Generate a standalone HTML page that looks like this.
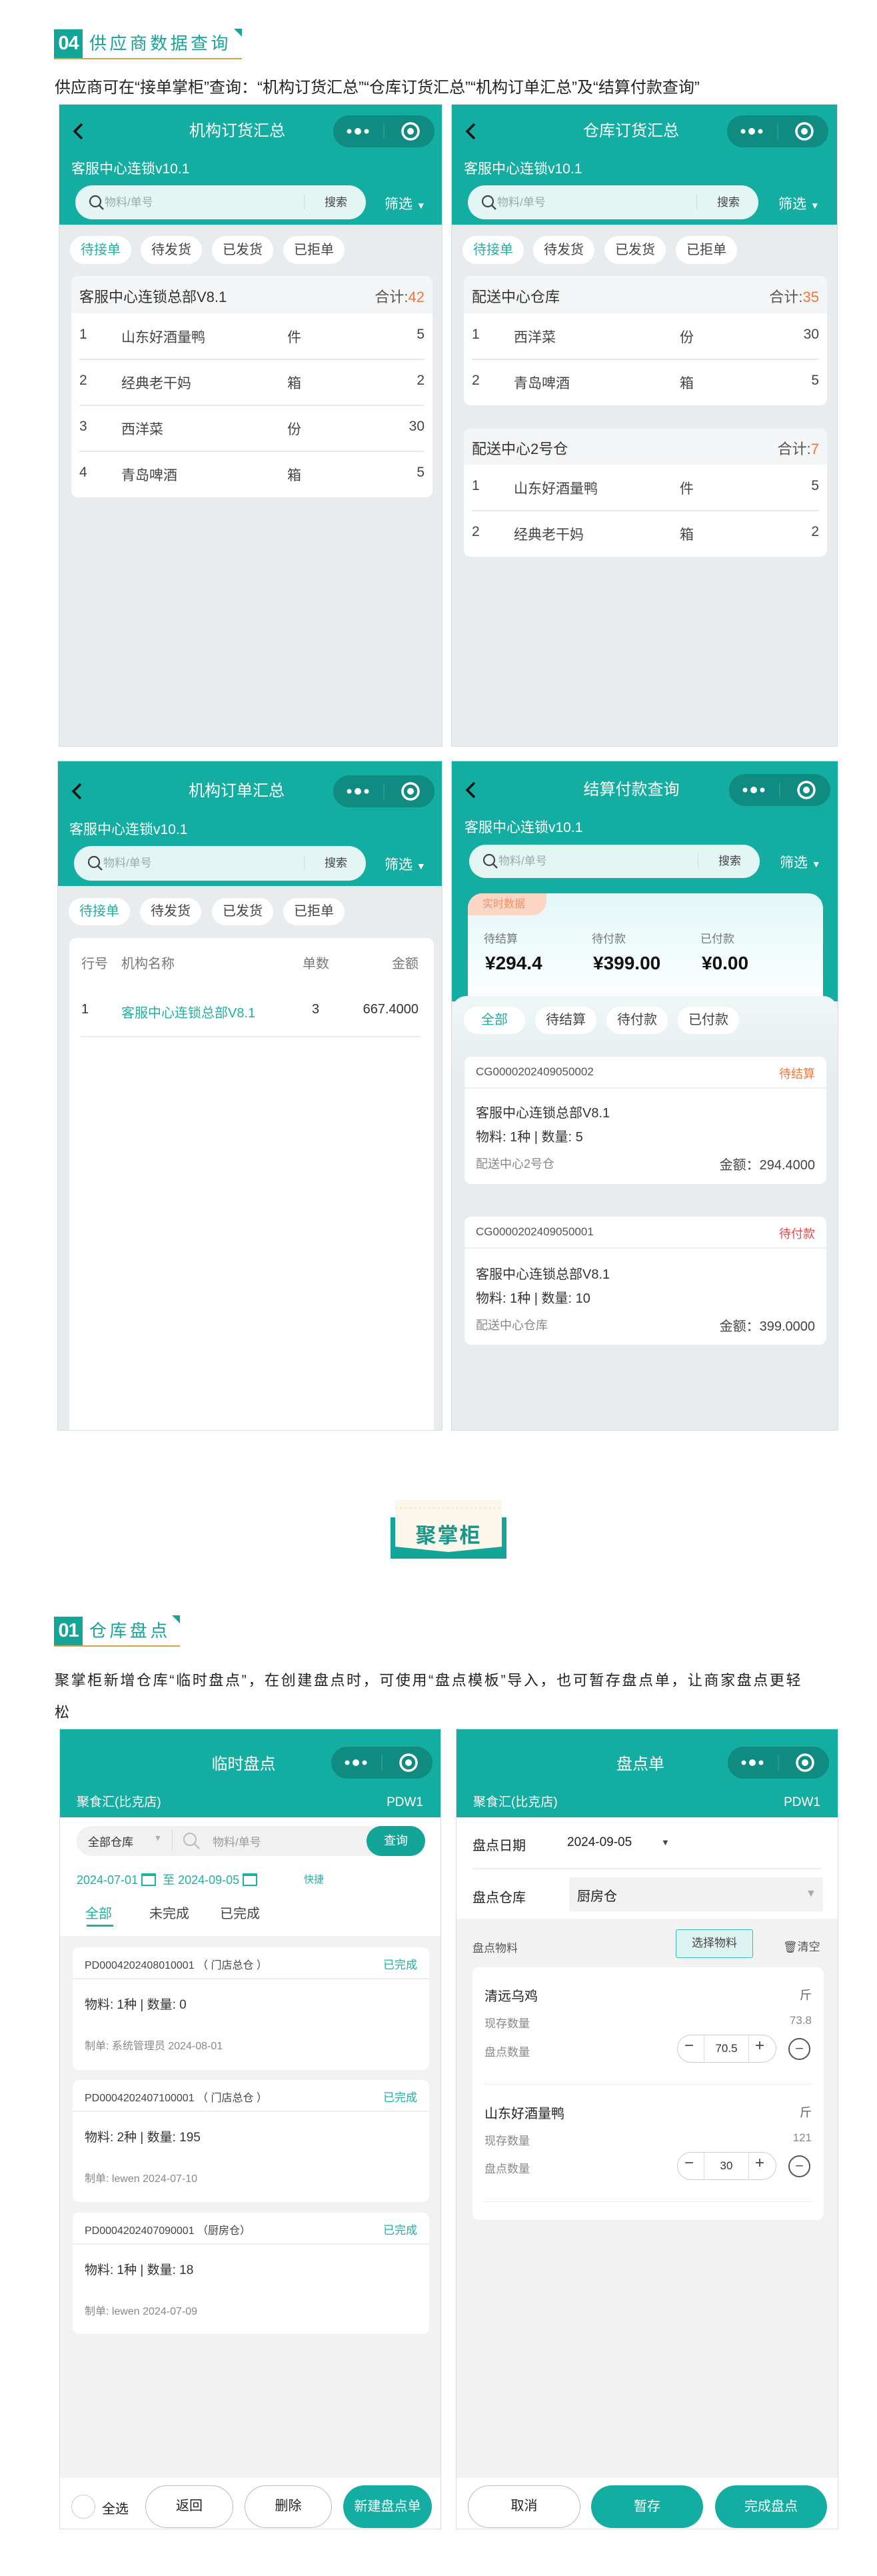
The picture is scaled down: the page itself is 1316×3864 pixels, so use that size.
<!DOCTYPE html>
<html><head><meta charset="utf-8">
<style>
*{margin:0;padding:0;box-sizing:border-box}
body{width:1316px;height:3864px;background:#fff;position:relative;overflow:hidden;font-family:"Liberation Sans","Noto Sans CJK SC",sans-serif;color:#333}
.a{position:absolute}
.ph{position:absolute;background:#e8ecee;overflow:hidden;border:1px solid #d8dcdc}
.hd{position:absolute;left:0;right:0;top:0;background:#13ada1}
.ttl{position:absolute;left:0;right:0;text-align:center;color:#fff;font-size:24px;line-height:30px}
.sub{position:absolute;color:#fff;font-size:21px;line-height:26px;white-space:nowrap}
.srch{position:absolute;background:#e4f6f4;border-radius:26px}
.srch .ph1{position:absolute;left:44px;top:0;font-size:17px;color:#9aa;line-height:inherit}
.srch .bt{position:absolute;right:28px;top:0;font-size:17px;color:#444}
.srch .sep{position:absolute;right:92px;top:14px;width:1px;height:22px;background:#cdd}
.flt{position:absolute;color:#fff;font-size:21px}
.tab{position:absolute;height:42px;width:92px;border-radius:21px;background:#fff;text-align:center;line-height:42px;font-size:20px;color:#444}
.card{position:absolute;background:#fff;border-radius:10px;overflow:hidden}
.ch{position:absolute;left:0;right:0;top:0;background:#f3f5f6}
.row{position:absolute;left:12px;right:12px;font-size:21px;color:#444}
.row span{position:absolute;top:0}
.t{color:#1fb0a4}
.o{color:#f0783a}
.r{color:#e84848}
.g{color:#888}
</style></head><body>

<!-- Section 04 header -->
<div class="a" style="left:81px;top:44px;width:43px;height:43px;background:#14a599;color:#fff;font-weight:bold;font-size:29px;line-height:43px;text-align:center;letter-spacing:-1px">04</div>
<div class="a" style="left:134px;top:42px;font-size:26px;color:#19a297;letter-spacing:4.4px;line-height:46px">供应商数据查询</div>
<svg class="a" style="left:351px;top:43px" width="12" height="12"><polygon points="0,0 12,0 12,12" fill="#14a599"/></svg>
<div class="a" style="left:81px;top:87px;width:282px;height:2px;background:#d6a24c"></div>
<div class="a" style="left:82px;top:116px;font-size:24px;line-height:32px;color:#222;white-space:nowrap">供应商可在“接单掌柜”查询：“机构订货汇总”“仓库订货汇总”“机构订单汇总”及“结算付款查询”</div>

<!-- Phone 1 -->
<div class="ph" style="left:88px;top:156px;width:576px;height:964px">
 <div class="hd" style="height:180px"></div>
 <svg class="a" style="left:16px;top:24px" width="24" height="32"><polyline points="18,5 7,16 18,27" fill="none" stroke="#111" stroke-width="3.5"/></svg>
 <div class="ttl" style="top:25px;padding-right:40px">机构订货汇总</div>
 <svg class="a" style="left:411px;top:16px" width="152" height="48"><rect width="152" height="48" rx="24" fill="#0f8b81"/><circle cx="24" cy="24" r="3.5" fill="#fff"/><circle cx="37" cy="24" r="5" fill="#fff"/><circle cx="50" cy="24" r="3.5" fill="#fff"/><line x1="76" y1="12" x2="76" y2="36" stroke="#2aa096" stroke-width="1.5"/><circle cx="116" cy="24" r="12" fill="none" stroke="#fff" stroke-width="3.5"/><circle cx="116" cy="24" r="5" fill="#fff"/></svg>
 <div class="sub" style="left:18px;top:84px">客服中心连锁v10.1</div>
 <div class="srch" style="left:24px;top:121px;width:436px;height:51px;line-height:51px"><svg class="a" style="left:20px;top:14px" width="24" height="24"><circle cx="10" cy="10" r="8" fill="none" stroke="#444" stroke-width="2.2"/><line x1="16" y1="16" x2="22" y2="22" stroke="#444" stroke-width="2.4"/></svg><span class="ph1">物料/单号</span><span class="sep"></span><span class="bt">搜索</span></div>
 <div class="flt" style="left:488px;top:133px">筛选 <span style="font-size:14px">▼</span></div>
 <div class="tab t" style="left:16px;top:197px">待接单</div>
 <div class="tab" style="left:122px;top:197px">待发货</div>
 <div class="tab" style="left:229px;top:197px">已发货</div>
 <div class="tab" style="left:336px;top:197px">已拒单</div>
 <div class="card" style="left:18px;top:257px;width:542px;height:332px">
  <div class="ch" style="height:56px"><span class="a" style="left:12px;top:14px;font-size:22px">客服中心连锁总部V8.1</span><span class="a" style="right:12px;top:14px;font-size:22px;color:#555">合计:<span class="o">42</span></span></div>
  <div class="row" style="top:76px"><span style="left:0">1</span><span style="left:63px">山东好酒量鸭</span><span style="left:312px">件</span><span style="right:0">5</span></div>
  <div class="a" style="left:12px;right:12px;top:124px;height:2px;background:#e6e8e8"></div>
  <div class="row" style="top:145px"><span style="left:0">2</span><span style="left:63px">经典老干妈</span><span style="left:312px">箱</span><span style="right:0">2</span></div>
  <div class="a" style="left:12px;right:12px;top:193px;height:2px;background:#e6e8e8"></div>
  <div class="row" style="top:214px"><span style="left:0">3</span><span style="left:63px">西洋菜</span><span style="left:312px">份</span><span style="right:0">30</span></div>
  <div class="a" style="left:12px;right:12px;top:262px;height:2px;background:#e6e8e8"></div>
  <div class="row" style="top:283px"><span style="left:0">4</span><span style="left:63px">青岛啤酒</span><span style="left:312px">箱</span><span style="right:0">5</span></div>
 </div>
</div>

<!-- Phone 2 -->
<div class="ph" style="left:677px;top:156px;width:580px;height:964px">
 <div class="hd" style="height:180px"></div>
 <svg class="a" style="left:16px;top:24px" width="24" height="32"><polyline points="18,5 7,16 18,27" fill="none" stroke="#111" stroke-width="3.5"/></svg>
 <div class="ttl" style="top:25px;padding-right:40px">仓库订货汇总</div>
 <svg class="a" style="left:413px;top:16px" width="152" height="48"><rect width="152" height="48" rx="24" fill="#0f8b81"/><circle cx="24" cy="24" r="3.5" fill="#fff"/><circle cx="37" cy="24" r="5" fill="#fff"/><circle cx="50" cy="24" r="3.5" fill="#fff"/><line x1="76" y1="12" x2="76" y2="36" stroke="#2aa096" stroke-width="1.5"/><circle cx="116" cy="24" r="12" fill="none" stroke="#fff" stroke-width="3.5"/><circle cx="116" cy="24" r="5" fill="#fff"/></svg>
 <div class="sub" style="left:18px;top:84px">客服中心连锁v10.1</div>
 <div class="srch" style="left:24px;top:121px;width:436px;height:51px;line-height:51px"><svg class="a" style="left:20px;top:14px" width="24" height="24"><circle cx="10" cy="10" r="8" fill="none" stroke="#444" stroke-width="2.2"/><line x1="16" y1="16" x2="22" y2="22" stroke="#444" stroke-width="2.4"/></svg><span class="ph1">物料/单号</span><span class="sep"></span><span class="bt">搜索</span></div>
 <div class="flt" style="left:490px;top:133px">筛选 <span style="font-size:14px">▼</span></div>
 <div class="tab t" style="left:16px;top:197px">待接单</div>
 <div class="tab" style="left:122px;top:197px">待发货</div>
 <div class="tab" style="left:229px;top:197px">已发货</div>
 <div class="tab" style="left:336px;top:197px">已拒单</div>
 <div class="card" style="left:18px;top:257px;width:545px;height:194px">
  <div class="ch" style="height:56px"><span class="a" style="left:12px;top:14px;font-size:22px">配送中心仓库</span><span class="a" style="right:12px;top:14px;font-size:22px;color:#555">合计:<span class="o">35</span></span></div>
  <div class="row" style="top:76px"><span style="left:0">1</span><span style="left:63px">西洋菜</span><span style="left:312px">份</span><span style="right:0">30</span></div>
  <div class="a" style="left:12px;right:12px;top:124px;height:2px;background:#e6e8e8"></div>
  <div class="row" style="top:145px"><span style="left:0">2</span><span style="left:63px">青岛啤酒</span><span style="left:312px">箱</span><span style="right:0">5</span></div>
 </div>
 <div class="card" style="left:18px;top:486px;width:545px;height:192px">
  <div class="ch" style="height:54px"><span class="a" style="left:12px;top:13px;font-size:22px">配送中心2号仓</span><span class="a" style="right:12px;top:13px;font-size:22px;color:#555">合计:<span class="o">7</span></span></div>
  <div class="row" style="top:74px"><span style="left:0">1</span><span style="left:63px">山东好酒量鸭</span><span style="left:312px">件</span><span style="right:0">5</span></div>
  <div class="a" style="left:12px;right:12px;top:122px;height:2px;background:#e6e8e8"></div>
  <div class="row" style="top:143px"><span style="left:0">2</span><span style="left:63px">经典老干妈</span><span style="left:312px">箱</span><span style="right:0">2</span></div>
 </div>
</div>

<!-- Phone 3 -->
<div class="ph" style="left:86px;top:1141px;width:578px;height:1005px">
 <div class="hd" style="height:187px"></div>
 <svg class="a" style="left:16px;top:29px" width="24" height="32"><polyline points="18,5 7,16 18,27" fill="none" stroke="#111" stroke-width="3.5"/></svg>
 <div class="ttl" style="top:30px;padding-right:40px">机构订单汇总</div>
 <svg class="a" style="left:413px;top:21px" width="152" height="48"><rect width="152" height="48" rx="24" fill="#0f8b81"/><circle cx="24" cy="24" r="3.5" fill="#fff"/><circle cx="37" cy="24" r="5" fill="#fff"/><circle cx="50" cy="24" r="3.5" fill="#fff"/><line x1="76" y1="12" x2="76" y2="36" stroke="#2aa096" stroke-width="1.5"/><circle cx="116" cy="24" r="12" fill="none" stroke="#fff" stroke-width="3.5"/><circle cx="116" cy="24" r="5" fill="#fff"/></svg>
 <div class="sub" style="left:17px;top:90px">客服中心连锁v10.1</div>
 <div class="srch" style="left:24px;top:127px;width:438px;height:52px;line-height:52px"><svg class="a" style="left:20px;top:14px" width="24" height="24"><circle cx="10" cy="10" r="8" fill="none" stroke="#444" stroke-width="2.2"/><line x1="16" y1="16" x2="22" y2="22" stroke="#444" stroke-width="2.4"/></svg><span class="ph1">物料/单号</span><span class="sep"></span><span class="bt">搜索</span></div>
 <div class="flt" style="left:490px;top:139px">筛选 <span style="font-size:14px">▼</span></div>
 <div class="tab t" style="left:16px;top:205px;height:41px;line-height:41px">待接单</div>
 <div class="tab" style="left:123px;top:205px;height:41px;line-height:41px">待发货</div>
 <div class="tab" style="left:231px;top:205px;height:41px;line-height:41px">已发货</div>
 <div class="tab" style="left:338px;top:205px;height:41px;line-height:41px">已拒单</div>
 <div class="card" style="left:17px;top:265px;width:547px;height:760px">
  <div class="a g" style="left:18px;top:22px;font-size:20px;color:#777">行号</div>
  <div class="a" style="left:78px;top:22px;font-size:20px;color:#777">机构名称</div>
  <div class="a" style="left:350px;top:22px;font-size:20px;color:#777">单数</div>
  <div class="a" style="right:23px;top:22px;font-size:20px;color:#777">金额</div>
  <div class="a" style="left:18px;top:96px;font-size:20px">1</div>
  <div class="a t" style="left:78px;top:96px;font-size:20px">客服中心连锁总部V8.1</div>
  <div class="a" style="left:364px;top:96px;font-size:20px">3</div>
  <div class="a" style="right:23px;top:96px;font-size:20px">667.4000</div>
  <div class="a" style="left:17px;right:20px;top:147px;height:2px;background:#eceeee"></div>
 </div>
</div>

<!-- Phone 4 -->
<div class="ph" style="left:677px;top:1141px;width:581px;height:1005px">
 <div class="hd" style="height:360px"></div>
 <svg class="a" style="left:16px;top:27px" width="24" height="32"><polyline points="18,5 7,16 18,27" fill="none" stroke="#111" stroke-width="3.5"/></svg>
 <div class="ttl" style="top:28px;padding-right:40px">结算付款查询</div>
 <svg class="a" style="left:416px;top:19px" width="152" height="48"><rect width="152" height="48" rx="24" fill="#0f8b81"/><circle cx="24" cy="24" r="3.5" fill="#fff"/><circle cx="37" cy="24" r="5" fill="#fff"/><circle cx="50" cy="24" r="3.5" fill="#fff"/><line x1="76" y1="12" x2="76" y2="36" stroke="#2aa096" stroke-width="1.5"/><circle cx="116" cy="24" r="12" fill="none" stroke="#fff" stroke-width="3.5"/><circle cx="116" cy="24" r="5" fill="#fff"/></svg>
 <div class="sub" style="left:19px;top:87px">客服中心连锁v10.1</div>
 <div class="srch" style="left:26px;top:125px;width:436px;height:50px;line-height:50px"><svg class="a" style="left:20px;top:13px" width="24" height="24"><circle cx="10" cy="10" r="8" fill="none" stroke="#444" stroke-width="2.2"/><line x1="16" y1="16" x2="22" y2="22" stroke="#444" stroke-width="2.4"/></svg><span class="ph1">物料/单号</span><span class="sep"></span><span class="bt">搜索</span></div>
 <div class="flt" style="left:492px;top:136px">筛选 <span style="font-size:14px">▼</span></div>
 <div class="a" style="left:24px;top:198px;width:533px;height:170px;border-radius:22px 22px 0 0;background:linear-gradient(180deg,#e2f7f7,#f8fdfd 75%,#fff)"></div>
 <div class="a" style="left:24px;top:198px;width:118px;height:33px;border-radius:22px 0 22px 0;background:#fcd6c4;color:#f39066;font-size:16px;line-height:33px;padding-left:22px">实时数据</div>
 <div class="a g" style="left:48px;top:252px;font-size:17px;color:#777">待结算</div>
 <div class="a" style="left:210px;top:252px;font-size:17px;color:#777">待付款</div>
 <div class="a" style="left:373px;top:252px;font-size:17px;color:#777">已付款</div>
 <div class="a" style="left:50px;top:287px;font-size:28px;font-weight:bold;color:#111">¥294.4</div>
 <div class="a" style="left:212px;top:287px;font-size:28px;font-weight:bold;color:#111">¥399.00</div>
 <div class="a" style="left:375px;top:287px;font-size:28px;font-weight:bold;color:#111">¥0.00</div>
 <div class="a" style="left:0;right:0;top:352px;bottom:0;border-radius:22px 22px 0 0;background:linear-gradient(180deg,#eef7f7,#e8ecee 120px)"></div>
 <div class="tab t" style="left:18px;top:368px;height:41px;line-height:41px">全部</div>
 <div class="tab" style="left:125px;top:368px;height:41px;line-height:41px">待结算</div>
 <div class="tab" style="left:232px;top:368px;height:41px;line-height:41px">待付款</div>
 <div class="tab" style="left:339px;top:368px;height:41px;line-height:41px">已付款</div>
 <div class="card" style="left:19px;top:443px;width:543px;height:191px">
  <div class="a" style="left:0;right:0;top:0;height:48px;border-bottom:2px solid #eef0f0"></div>
  <div class="a" style="left:17px;top:13px;font-size:17px;color:#555">CG0000202409050002</div>
  <div class="a o" style="right:17px;top:12px;font-size:18px">待结算</div>
  <div class="a" style="left:17px;top:68px;font-size:20px">客服中心连锁总部V8.1</div>
  <div class="a" style="left:17px;top:104px;font-size:20px">物料: 1种 | 数量: 5</div>
  <div class="a" style="left:17px;top:147px;font-size:18px;color:#888">配送中心2号仓</div>
  <div class="a" style="right:17px;top:146px;font-size:20px;color:#444">金额：294.4000</div>
 </div>
 <div class="card" style="left:19px;top:683px;width:543px;height:192px">
  <div class="a" style="left:0;right:0;top:0;height:48px;border-bottom:2px solid #eef0f0"></div>
  <div class="a" style="left:17px;top:13px;font-size:17px;color:#555">CG0000202409050001</div>
  <div class="a r" style="right:17px;top:12px;font-size:18px">待付款</div>
  <div class="a" style="left:17px;top:70px;font-size:20px">客服中心连锁总部V8.1</div>
  <div class="a" style="left:17px;top:106px;font-size:20px">物料: 1种 | 数量: 10</div>
  <div class="a" style="left:17px;top:149px;font-size:18px;color:#888">配送中心仓库</div>
  <div class="a" style="right:17px;top:148px;font-size:20px;color:#444">金额：399.0000</div>
 </div>
</div>

<!-- Banner 聚掌柜 -->
<div class="a" style="left:586px;top:2276px;width:174px;height:62px;background:#14a599"></div>
<svg class="a" style="left:593px;top:2250px" width="160" height="80"><polygon points="0,0 160,0 160,70 80,78 0,70" fill="#fdf6ea"/><line x1="0" y1="12" x2="160" y2="12" stroke="#f0d8b6" stroke-width="1" stroke-dasharray="4,3"/></svg>
<div class="a" style="left:586px;top:2278px;width:174px;text-align:center;font-size:31px;font-weight:bold;color:#17978c;letter-spacing:2px">聚掌柜</div>

<!-- Section 01 -->
<div class="a" style="left:81px;top:2425px;width:43px;height:43px;background:#14a599;color:#fff;font-weight:bold;font-size:29px;line-height:43px;text-align:center;letter-spacing:-1px">01</div>
<div class="a" style="left:134px;top:2423px;font-size:26px;color:#19a297;letter-spacing:4.4px;line-height:46px">仓库盘点</div>
<svg class="a" style="left:258px;top:2423px" width="12" height="12"><polygon points="0,0 12,0 12,12" fill="#14a599"/></svg>
<div class="a" style="left:81px;top:2468px;width:189px;height:2px;background:#d6a24c"></div>
<div class="a" style="left:82px;top:2497px;font-size:22px;line-height:48px;color:#222;letter-spacing:2.6px;white-space:nowrap">聚掌柜新增仓库“临时盘点”，在创建盘点时，可使用“盘点模板”导入，也可暂存盘点单，让商家盘点更轻<br>松</div>

<!-- Phone 5 -->
<div class="ph" style="left:89px;top:2593px;width:573px;height:1201px;background:#f2f2f2">
 <div class="hd" style="height:132px"></div>
 <div class="ttl" style="top:38px;padding-right:20px">临时盘点</div>
 <svg class="a" style="left:407px;top:26px" width="152" height="48"><rect width="152" height="48" rx="24" fill="#0f8b81"/><circle cx="24" cy="24" r="3.5" fill="#fff"/><circle cx="37" cy="24" r="5" fill="#fff"/><circle cx="50" cy="24" r="3.5" fill="#fff"/><line x1="76" y1="12" x2="76" y2="36" stroke="#2aa096" stroke-width="1.5"/><circle cx="116" cy="24" r="12" fill="none" stroke="#fff" stroke-width="3.5"/><circle cx="116" cy="24" r="5" fill="#fff"/></svg>
 <div class="sub" style="left:25px;top:97px;font-size:19px">聚食汇(比克店)</div>
 <div class="sub" style="right:26px;top:97px;font-size:19px">PDW1</div>
 <div class="a" style="left:0;right:0;top:132px;height:178px;background:#fff"></div>
 <div class="a" style="left:25px;top:145px;width:522px;height:45px;border-radius:23px;background:#f1f1f1"></div>
 <div class="a" style="left:42px;top:155px;font-size:17px">全部仓库</div>
 <div class="a" style="left:141px;top:156px;font-size:12px;color:#aaa">▼</div>
 <div class="a" style="left:168px;top:151px;width:1px;height:32px;background:#ddd"></div>
 <svg class="a" style="left:184px;top:154px" width="28" height="28"><circle cx="11" cy="11" r="9" fill="none" stroke="#bbb" stroke-width="2"/><line x1="18" y1="18" x2="25" y2="25" stroke="#bbb" stroke-width="2"/></svg>
 <div class="a" style="left:229px;top:155px;font-size:17px;color:#999">物料/单号</div>
 <div class="a" style="left:460px;top:145px;width:88px;height:45px;border-radius:23px;background:#14a599;color:#fff;font-size:18px;text-align:center;line-height:45px">查询</div>
 <div class="a t" style="left:25px;top:212px;font-size:18px;white-space:nowrap">2024-07-01 <span style="display:inline-block;width:22px;height:19px;border:2px solid #1fb0a4;border-top-width:4px;vertical-align:-3px"></span> &nbsp;至 2024-09-05 <span style="display:inline-block;width:22px;height:19px;border:2px solid #1fb0a4;border-top-width:4px;vertical-align:-3px"></span></div>
 <div class="a t" style="left:366px;top:214px;font-size:15px">快捷</div>
 <div class="a t" style="left:38px;top:260px;font-size:20px">全部</div>
 <div class="a" style="left:40px;top:293px;width:40px;height:3px;background:#1fb0a4"></div>
 <div class="a" style="left:134px;top:260px;font-size:20px;color:#444">未完成</div>
 <div class="a" style="left:240px;top:260px;font-size:20px;color:#444">已完成</div>

 <div class="card" style="left:19px;top:327px;width:535px;height:184px">
  <div class="a" style="left:0;right:0;top:0;height:48px;border-bottom:2px solid #eee"></div>
  <div class="a" style="left:18px;top:13px;font-size:16px;color:#444;white-space:nowrap">PD0004202408010001 （ 门店总仓 ）</div>
  <div class="a t" style="right:18px;top:12px;font-size:17px">已完成</div>
  <div class="a" style="left:18px;top:71px;font-size:19px">物料: 1种 | 数量: 0</div>
  <div class="a g" style="left:18px;top:134px;font-size:16px">制单: 系统管理员 2024-08-01</div>
 </div>
 <div class="card" style="left:19px;top:526px;width:535px;height:183px">
  <div class="a" style="left:0;right:0;top:0;height:48px;border-bottom:2px solid #eee"></div>
  <div class="a" style="left:18px;top:13px;font-size:16px;color:#444;white-space:nowrap">PD0004202407100001 （ 门店总仓 ）</div>
  <div class="a t" style="right:18px;top:12px;font-size:17px">已完成</div>
  <div class="a" style="left:18px;top:71px;font-size:19px">物料: 2种 | 数量: 195</div>
  <div class="a g" style="left:18px;top:134px;font-size:16px">制单: lewen 2024-07-10</div>
 </div>
 <div class="card" style="left:19px;top:725px;width:535px;height:182px">
  <div class="a" style="left:0;right:0;top:0;height:48px;border-bottom:2px solid #eee"></div>
  <div class="a" style="left:18px;top:13px;font-size:16px;color:#444;white-space:nowrap">PD0004202407090001 （厨房仓）</div>
  <div class="a t" style="right:18px;top:12px;font-size:17px">已完成</div>
  <div class="a" style="left:18px;top:71px;font-size:19px">物料: 1种 | 数量: 18</div>
  <div class="a g" style="left:18px;top:134px;font-size:16px">制单: lewen 2024-07-09</div>
 </div>

 <div class="a" style="left:0;right:0;top:1123px;bottom:0;background:#fff"></div>
 <div class="a" style="left:17px;top:1148px;width:36px;height:36px;border-radius:50%;border:1.5px solid #ccc"></div>
 <div class="a" style="left:63px;top:1153px;font-size:20px;color:#222">全选</div>
 <div class="a" style="left:128px;top:1134px;width:132px;height:64px;border-radius:32px;border:1.5px solid #bbb;text-align:center;line-height:61px;font-size:20px;color:#222">返回</div>
 <div class="a" style="left:277px;top:1134px;width:131px;height:64px;border-radius:32px;border:1.5px solid #bbb;text-align:center;line-height:61px;font-size:20px;color:#222">删除</div>
 <div class="a" style="left:425px;top:1134px;width:133px;height:64px;border-radius:32px;background:#14ada1;text-align:center;line-height:64px;font-size:20px;color:#fff">新建盘点单</div>
</div>

<!-- Phone 6 -->
<div class="ph" style="left:684px;top:2593px;width:574px;height:1201px;background:#f2f2f2">
 <div class="hd" style="height:132px"></div>
 <div class="ttl" style="top:38px;padding-right:20px">盘点单</div>
 <svg class="a" style="left:407px;top:26px" width="152" height="48"><rect width="152" height="48" rx="24" fill="#0f8b81"/><circle cx="24" cy="24" r="3.5" fill="#fff"/><circle cx="37" cy="24" r="5" fill="#fff"/><circle cx="50" cy="24" r="3.5" fill="#fff"/><line x1="76" y1="12" x2="76" y2="36" stroke="#2aa096" stroke-width="1.5"/><circle cx="116" cy="24" r="12" fill="none" stroke="#fff" stroke-width="3.5"/><circle cx="116" cy="24" r="5" fill="#fff"/></svg>
 <div class="sub" style="left:25px;top:97px;font-size:19px">聚食汇(比克店)</div>
 <div class="sub" style="right:26px;top:97px;font-size:19px">PDW1</div>
 <div class="a" style="left:0;right:0;top:132px;height:152px;background:#fff"></div>
 <div class="a" style="left:24px;top:158px;font-size:20px;color:#222">盘点日期</div>
 <div class="a" style="left:166px;top:159px;font-size:19px;color:#222">2024-09-05</div>
 <div class="a" style="left:307px;top:162px;font-size:13px;color:#444">▼</div>
 <div class="a" style="left:24px;right:24px;top:208px;height:2px;background:#eee"></div>
 <div class="a" style="left:24px;top:236px;font-size:20px;color:#222">盘点仓库</div>
 <div class="a" style="left:169px;top:222px;width:381px;height:51px;background:#f2f2f2;border-radius:3px"></div>
 <div class="a" style="left:181px;top:234px;font-size:20px;color:#222">厨房仓</div>
 <div class="a" style="left:524px;top:238px;font-size:16px;color:#aaa">▼</div>
 <div class="a" style="left:24px;top:314px;font-size:17px;color:#555">盘点物料</div>
 <div class="a" style="left:329px;top:300px;width:116px;height:43px;border:1.5px solid #3fb8ad;background:#ddf3f1;border-radius:3px;text-align:center;line-height:40px;font-size:17px;color:#444">选择物料</div>
 <div class="a" style="left:490px;top:312px;font-size:17px;color:#555">🗑清空</div>
 <div class="card" style="left:24px;top:357px;width:527px;height:379px">
  <div class="a" style="left:18px;top:27px;font-size:20px;color:#222">清远乌鸡</div>
  <div class="a" style="right:18px;top:28px;font-size:18px;color:#666">斤</div>
  <div class="a g" style="left:18px;top:70px;font-size:17px">现存数量</div>
  <div class="a g" style="right:18px;top:70px;font-size:17px">73.8</div>
  <div class="a g" style="left:18px;top:113px;font-size:17px">盘点数量</div>
  <div class="a" style="left:307px;top:101px;width:149px;height:42px;border:1.5px solid #ccc;border-radius:21px"></div>
  <div class="a" style="left:347px;top:101px;width:68px;height:42px;border-left:1.5px solid #ddd;border-right:1.5px solid #ddd;text-align:center;line-height:42px;font-size:17px">70.5</div>
  <div class="a" style="left:318px;top:104px;font-size:24px;color:#444">−</div>
  <div class="a" style="left:424px;top:104px;font-size:24px;color:#444">+</div>
  <div class="a" style="left:474px;top:106px;width:33px;height:33px;border-radius:50%;border:2px solid #555;text-align:center;line-height:27px;font-size:22px;color:#555">−</div>
  <div class="a" style="left:18px;right:18px;top:175px;border-top:1.5px dotted #ddd"></div>
  <div class="a" style="left:18px;top:203px;font-size:20px;color:#222">山东好酒量鸭</div>
  <div class="a" style="right:18px;top:204px;font-size:18px;color:#666">斤</div>
  <div class="a g" style="left:18px;top:246px;font-size:17px">现存数量</div>
  <div class="a g" style="right:18px;top:246px;font-size:17px">121</div>
  <div class="a g" style="left:18px;top:288px;font-size:17px">盘点数量</div>
  <div class="a" style="left:307px;top:277px;width:149px;height:42px;border:1.5px solid #ccc;border-radius:21px"></div>
  <div class="a" style="left:347px;top:277px;width:68px;height:42px;border-left:1.5px solid #ddd;border-right:1.5px solid #ddd;text-align:center;line-height:42px;font-size:17px">30</div>
  <div class="a" style="left:318px;top:280px;font-size:24px;color:#444">−</div>
  <div class="a" style="left:424px;top:280px;font-size:24px;color:#444">+</div>
  <div class="a" style="left:474px;top:282px;width:33px;height:33px;border-radius:50%;border:2px solid #555;text-align:center;line-height:27px;font-size:22px;color:#555">−</div>
  <div class="a" style="left:18px;right:18px;top:351px;border-top:1.5px dotted #ddd"></div>
 </div>
 <div class="a" style="left:0;right:0;top:1123px;bottom:0;background:#fff"></div>
 <div class="a" style="left:17px;top:1134px;width:169px;height:64px;border-radius:32px;border:1.5px solid #bbb;text-align:center;line-height:61px;font-size:20px;color:#222">取消</div>
 <div class="a" style="left:202px;top:1134px;width:168px;height:64px;border-radius:32px;background:#14ada1;text-align:center;line-height:64px;font-size:20px;color:#fff">暂存</div>
 <div class="a" style="left:388px;top:1134px;width:168px;height:64px;border-radius:32px;background:#14ada1;text-align:center;line-height:64px;font-size:20px;color:#fff">完成盘点</div>
</div>

</body></html>
